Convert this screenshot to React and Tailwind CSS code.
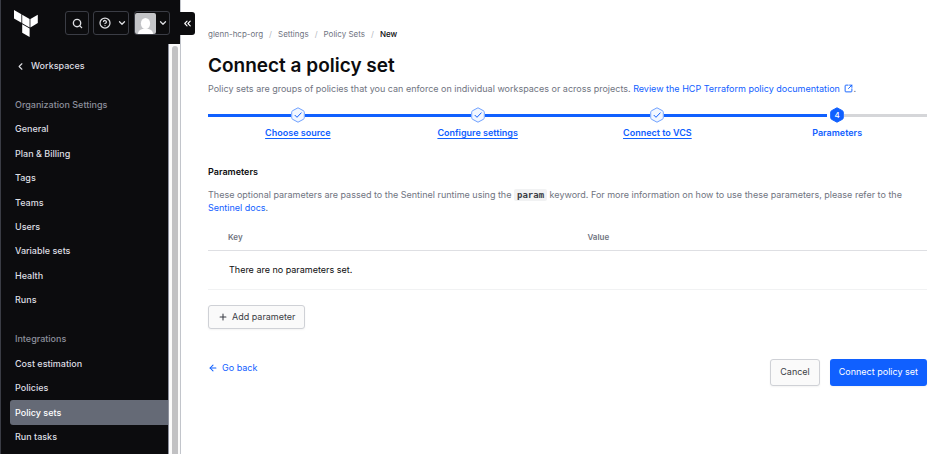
import { ArrowLeft, ChevronDown, ChevronLeft, ChevronsLeft, CircleHelp, Plus, Search, SquareArrowOutUpRight } from 'lucide-react';

const orgLinks = ['General', 'Plan & Billing', 'Tags', 'Teams', 'Users', 'Variable sets', 'Health', 'Runs'];
const integrationLinks = ['Cost estimation', 'Policies', 'Policy sets', 'Run tasks'];
const steps = ['Choose source', 'Configure settings', 'Connect to VCS', 'Parameters'];

function TerraformLogo() {
  return (
    <svg width="24" height="27" viewBox="0 0 24 27" fill="#fff" aria-label="Terraform">
      <path d="M0 0 7.4 4.3v8.5L0 8.5zM8.2 4.7l7.4 4.3v8.5L8.2 13.2zM16.4 9l7.4-4.3v8.4l-7.4 4.4zM8.2 14.2l7.4 4.3V27l-7.4-4.3z" />
    </svg>
  );
}

function NavLinks({ links, active, className }) {
  return (
    <ul className={`flex flex-col ${className}`}>
      {links.map((label) => (
        <li key={label} className="flex flex-1 pl-[10px]">
          <a
            href="#"
            className={
              label === active
                ? 'flex flex-1 items-center rounded-l-[3px] bg-[#656a76] pl-[5px] text-white'
                : 'flex flex-1 items-center pl-[5px]'
            }
          >
            {label}
          </a>
        </li>
      ))}
    </ul>
  );
}

function Sidebar() {
  return (
    <aside className="flex w-[180px] shrink-0 flex-col border-l border-[#3b3d45] bg-[#0c0c0e] text-[9px] font-medium text-[#dedfe3]">
      <header className="flex h-11 shrink-0 items-center pt-[2px] pl-[13px]">
        <a href="#">
          <TerraformLogo />
        </a>
        <button aria-label="Search" className="ml-[27px] flex h-6 w-6 items-center justify-center rounded-[3px] border border-[#3b3d45]">
          <Search size={11} strokeWidth={3} />
        </button>
        <button aria-label="Help" className="ml-1 flex h-6 w-9 items-center justify-between rounded-[3px] border border-[#3b3d45] pr-[1px] pl-[5px]">
          <CircleHelp size={12} strokeWidth={2.5} />
          <ChevronDown size={10} strokeWidth={3} />
        </button>
        <button aria-label="Account" className="ml-[5px] flex h-6 w-9 items-center justify-between rounded-[3px] border border-[#3b3d45] pr-[1px]">
          <svg width="21" height="21" viewBox="0 0 21 21">
            <rect width="21" height="21" rx="2" fill="#c3c4c7" />
            <ellipse cx="10.5" cy="10.5" rx="4.6" ry="5.5" fill="#fff" />
            <path d="M3 21c0-3.500 3-5.300 7.500-5.300S18 17.500 18 21z" fill="#fff" />
          </svg>
          <ChevronDown size={10} strokeWidth={3} />
        </button>
      </header>
      <div className="flex flex-1">
        <nav className="min-w-0 flex-1 pt-[10px]">
          <a href="#" className="flex h-6 items-center gap-[5px] pl-[14px]">
            <ChevronLeft size={11} strokeWidth={2.5} />
            Workspaces
          </a>
          <h2 className="mt-[14px] flex h-[25px] items-center pl-[14px] text-[#8c909c]">Organization Settings</h2>
          <NavLinks links={orgLinks} className="-ml-px min-h-[195px]" />
          <h2 className="mt-[14px] flex h-[25px] items-center pl-[14px] text-[#8c909c]">Integrations</h2>
          <NavLinks links={integrationLinks} active="Policy sets" className="-ml-px min-h-[98px]" />
        </nav>
        <div className="flex w-3 justify-center border-l border-[#8c909c] bg-[#fafafa] pt-[2px]">
          <div className="w-[6px] rounded-t-full bg-[#c1c1c3]"></div>
        </div>
      </div>
    </aside>
  );
}

function Step({ label, number, done }) {
  return (
    <li className="flex flex-col">
      <div className="flex items-center">
        <div className="flex-1">
          <div className={done ? 'h-[3px] bg-[#1060ff]' : 'mr-[3px] h-[3px] bg-[#1060ff]'}></div>
        </div>
        <svg width="14" height="16" viewBox="0 0 14 16">
          <path
            d="M7 .8 12.400 3.700Q13.300 4.200 13.300 5.200V10.800Q13.300 11.800 12.400 12.300L7 15.200 1.600 12.300Q.7 11.800.7 10.800V5.200Q.7 4.200 1.600 3.700Z"
            fill={done ? '#f2f7ff' : '#1060ff'}
            stroke={done ? '#6ea0ff' : '#1060ff'}
            strokeLinejoin="round"
          />
          {done ? (
            <path d="M4 8.300 6 10.300 10.200 5.900" fill="none" stroke="#1060ff" strokeLinecap="round" strokeLinejoin="round" />
          ) : (
            <text x="7" y="11" textAnchor="middle" fontSize="8" fontWeight="500" fill="#fff">
              {number}
            </text>
          )}
        </svg>
        <div className={done ? 'h-[3px] flex-1 bg-[#1060ff]' : 'h-[3px] flex-1 bg-[#d5d6d9]'}></div>
      </div>
      <div className="mt-[3px] text-center leading-[14px] font-semibold text-[#1060ff]">
        {done ? (
          <a href="#" className="underline underline-offset-2">
            {label}
          </a>
        ) : (
          <span>{label}</span>
        )}
      </div>
    </li>
  );
}

export default function App() {
  return (
    <div className="flex min-h-screen bg-white font-['Inter','Liberation_Sans',sans-serif] text-[9px] text-[#70747f]">
      <Sidebar />
      <div className="relative w-0">
        <button aria-label="Collapse sidebar" className="absolute top-3 left-0 flex h-[23px] w-[15px] items-center justify-center rounded-r-[3px] bg-[#0c0c0e] text-white">
          <ChevronsLeft size={11} strokeWidth={2.5} />
        </button>
      </div>
      <main className="min-w-0 flex-1 border-l border-[#c2c5cb] pt-[27px] pr-[9px] pb-8 pl-[27px]">
        <nav aria-label="Breadcrumb">
          <ol className="flex gap-[6px] text-[8px] leading-[14px]">
            <li><a href="#">glenn-hcp-org</a></li>
            <li className="text-[#b5b8c0]">/</li>
            <li><a href="#">Settings</a></li>
            <li className="text-[#b5b8c0]">/</li>
            <li><a href="#">Policy Sets</a></li>
            <li className="text-[#b5b8c0]">/</li>
            <li className="font-medium text-[#0c0c0e]">New</li>
          </ol>
        </nav>

        <h1 className="mt-3 text-[19px] leading-[26px] font-semibold text-[#0c0c0e]">Connect a policy set</h1>
        <p className="mt-[3px] leading-[14px]">
          Policy sets are groups of policies that you can enforce on individual workspaces or across projects.{' '}
          <a href="#" className="text-[#1060ff]">
            Review the HCP Terraform policy documentation{' '}
            <SquareArrowOutUpRight size={9} strokeWidth={2.5} className="ml-[2px] inline align-[-1px]" />
          </a>
          .
        </p>

        <ol className="mt-[11px] grid grid-cols-4">
          {steps.map((label, i) => (
            <Step key={label} label={label} number={i + 1} done={i < 3} />
          ))}
        </ol>

        <h2 className="mt-[25px] leading-[14px] font-semibold text-[#0c0c0e]">Parameters</h2>
        <p className="mt-[9px] leading-[13px]">
          These optional parameters are passed to the Sentinel runtime using the{' '}
          <code className="rounded-[2px] bg-[#f1f2f3] px-[3px] py-px font-['DejaVu_Sans_Mono','Liberation_Mono',monospace] leading-none font-bold text-[#3b3d45]">param</code>{' '}
          keyword. For more information on how to use these parameters, please refer to the{' '}
          <a href="#" className="text-[#1060ff]">Sentinel docs</a>.
        </p>

        <table className="mt-[10px] w-full table-fixed text-left">
          <thead>
            <tr className="h-[26px] border-b border-[#dedfe3] text-[8px]">
              <th className="pl-[20px] font-semibold">Key</th>
              <th className="pl-[20px] font-semibold">Value</th>
            </tr>
          </thead>
          <tbody>
            <tr className="h-[39px] border-b border-[#f1f2f3]">
              <td colSpan={2} className="pl-[21px] text-[#0c0c0e]">There are no parameters set.</td>
            </tr>
          </tbody>
        </table>

        <button className="mt-[15px] flex h-6 items-center gap-1 rounded-[3px] border border-[#cfd1d6] bg-[#fafafa] px-[9px] text-[#3b3d45] shadow-xs">
          <Plus size={10} strokeWidth={2.5} />
          Add parameter
        </button>

        <div className="mt-[30px] flex items-start justify-between">
          <a href="#" className="flex items-center gap-1 leading-[18px] text-[#1060ff]">
            <ArrowLeft size={10} strokeWidth={2.5} />
            Go back
          </a>
          <div className="flex gap-[10px]">
            <button className="h-[27px] rounded-[3px] border border-[#cfd1d6] bg-[#fafafa] px-[9px] text-[#3b3d45] shadow-xs">Cancel</button>
            <button className="h-[27px] rounded-[3px] bg-[#1060ff] px-[9px] text-white shadow-xs">Connect policy set</button>
          </div>
        </div>
      </main>
    </div>
  );
}
